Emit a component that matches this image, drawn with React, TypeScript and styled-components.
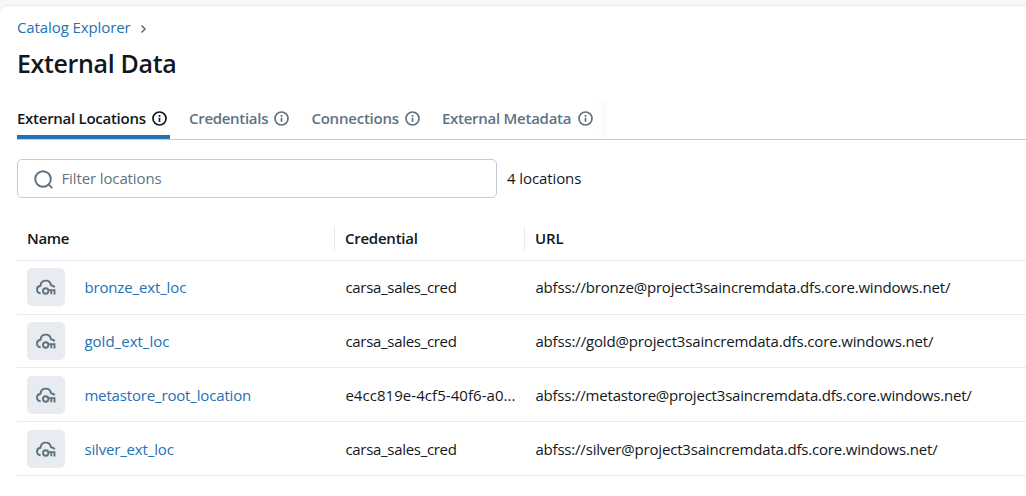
import React from 'react';
import styled, { createGlobalStyle } from 'styled-components';

const GlobalStyle = createGlobalStyle`
  * { box-sizing: border-box; }
  body {
    margin: 0;
    background: #f6f7f9;
    color: #11171c;
    font-family: "Segoe UI", "Open Sans", "Noto Sans", sans-serif;
    font-size: 15px;
    line-height: 24px;
    overflow: hidden;
  }
`;

const Page = styled.div`
  height: 496px;
  padding-top: 5px;
`;

const Panel = styled.main`
  height: 491px;
  padding: 9px 0 0 17px;
  background: #fff;
  border-top: 1px solid #e8ecf0;
  border-top-left-radius: 8px;
`;

const Text = styled.span<{ $spacing?: number }>`
  letter-spacing: ${(p) => p.$spacing ?? 0}px;
  white-space: nowrap;
`;

const Breadcrumb = styled.nav`
  display: flex;
  align-items: center;
  gap: 9px;
  height: 24px;
  color: #2272b4;
`;

const Title = styled.h1`
  margin: 8px 0 0;
  height: 32px;
  font-size: 25px;
  line-height: 32px;
  font-weight: 600;
`;

const Tabs = styled.div`
  display: flex;
  gap: 19px;
  height: 42px;
  margin-top: 19px;
  border-bottom: 1px solid #c0cdd8;
`;

const Tab = styled.button<{ $width: number; $active?: boolean }>`
  display: flex;
  align-items: center;
  justify-content: space-between;
  width: ${(p) => p.$width}px;
  height: 41px;
  padding: 6px 3px 4px 0;
  border: 0;
  border-bottom: 4px solid ${(p) => (p.$active ? '#2272b4' : 'transparent')};
  background: none;
  color: ${(p) => (p.$active ? '#11171c' : '#5f7281')};
  font: inherit;
  font-weight: 600;
`;

const ScrollShade = styled.div`
  width: 10px;
  height: 36px;
  margin: 4px 0 0 -17px;
  background: linear-gradient(90deg, #fff, #fbfbfb 50%, #fff);
`;

const Toolbar = styled.div`
  display: flex;
  align-items: center;
  gap: 10px;
  margin-top: 19px;
`;

const Search = styled.label`
  display: flex;
  align-items: center;
  gap: 9px;
  width: 480px;
  height: 39px;
  padding: 0 0 1px 16px;
  border: 1px solid #c0cdd8;
  border-radius: 5px;
  color: #5f7281;
`;

const Count = styled.div`
  padding-bottom: 2px;
`;

const Table = styled.div`
  margin-top: 18px;
`;

const Row = styled.div<{ $header?: boolean }>`
  display: grid;
  grid-template-columns: 317px 190px 1fr;
  align-items: center;
  height: ${(p) => (p.$header ? 44.8 : 53.8)}px;
  border-bottom: 1px solid #e8ecf0;
  font-weight: ${(p) => (p.$header ? 600 : 400)};
`;

const HeadCell = styled.div<{ $divided?: boolean }>`
  height: 24px;
  padding-left: 10px;
  border-left: ${(p) => (p.$divided ? '1px solid #e8ecf0' : '0')};
`;

const Cell = styled.div`
  display: flex;
  align-items: center;
  padding-left: 11.4px;
`;

const NameCell = styled(Cell)`
  gap: 19.4px;
  padding-left: 10px;
  color: #2272b4;
`;

const IconTile = styled.div`
  display: flex;
  align-items: center;
  justify-content: center;
  width: 38px;
  height: 38px;
  border-radius: 5px;
  background: #e8ecf0;
  color: #5f7281;
`;

const ChevronSvg = styled.svg`
  margin-top: 4px;
`;

const SearchSvg = styled.svg`
  margin: 2px 0 0 -0.5px;
`;

const InfoSvg = styled.svg`
  margin-top: 1px;
`;

const ChevronIcon = () => (
  <ChevronSvg width="7" height="10" viewBox="0 0 7 10" fill="none" stroke="#5f7281" strokeWidth="1.6">
    <path d="M1.5 1.5 5 5 1.5 8.5" />
  </ChevronSvg>
);

const InfoIcon = () => (
  <InfoSvg width="15" height="15" viewBox="0 0 15 15" fill="none" stroke="currentColor" strokeWidth="1.7">
    <circle cx="7.5" cy="7.5" r="6.5" />
    <path d="M7.5 6.8v4" />
    <path d="M7.5 4v1.8" />
  </InfoSvg>
);

const SearchIcon = () => (
  <SearchSvg width="19" height="19" viewBox="0 0 19 19" fill="none" stroke="currentColor" strokeWidth="1.9">
    <circle cx="9" cy="9" r="7.8" />
    <path d="m14.2 14.2 4 4" />
  </SearchSvg>
);

const CloudKeyIcon = () => (
  <svg width="20" height="16" viewBox="0 0 20 16" fill="none" stroke="currentColor" strokeWidth="1.9">
    <path d="M4.6 14.3C2.6 13.9 1 12.5 1 10.4 1 8.4 2.5 7 4.5 6.7 4.8 3.6 6.9 1.6 9.8 1.6c2.8 0 4.7 1.8 5.2 4.6 1.8.1 3 .9 3.7 2.1" />
    <circle cx="9.7" cy="12" r="2.7" />
    <path d="M12.4 11.1h7M18.5 11.1v4.3M15.3 11.1v4.1" />
  </svg>
);

const tabs = [
  { label: 'External Locations', width: 153, spacing: -0.27 },
  { label: 'Credentials', width: 103.4, spacing: -0.3 },
  { label: 'Connections', width: 111.6, spacing: -0.22 },
  { label: 'External Metadata', width: 154, spacing: -0.27 },
];

const rows = [
  { name: 'bronze_ext_loc', cred: 'carsa_sales_cred', url: 'abfss://bronze@project3saincremdata.dfs.core.windows.net/', s: [-0.14, -0.3, -0.18] },
  { name: 'gold_ext_loc', cred: 'carsa_sales_cred', url: 'abfss://gold@project3saincremdata.dfs.core.windows.net/', s: [0.02, -0.3, -0.15] },
  { name: 'metastore_root_location', cred: 'e4cc819e-4cf5-40f6-a0...', url: 'abfss://metastore@project3saincremdata.dfs.core.windows.net/', s: [-0.16, 0.05, -0.2] },
  { name: 'silver_ext_loc', cred: 'carsa_sales_cred', url: 'abfss://silver@project3saincremdata.dfs.core.windows.net/', s: [-0.16, -0.3, -0.19] },
];

export default function App() {
  return (
    <Page>
      <GlobalStyle />
      <Panel>
        <Breadcrumb>
          <Text $spacing={-0.1}>Catalog Explorer</Text>
          <ChevronIcon />
        </Breadcrumb>
        <Title><Text $spacing={-0.35}>External Data</Text></Title>
        <Tabs>
          {tabs.map((t, i) => (
            <Tab key={t.label} $width={t.width} $active={i === 0}>
              <Text $spacing={t.spacing}>{t.label}</Text>
              <InfoIcon />
            </Tab>
          ))}
          <ScrollShade />
        </Tabs>
        <Toolbar>
          <Search>
            <SearchIcon />
            <Text $spacing={-0.12}>Filter locations</Text>
          </Search>
          <Count><Text $spacing={-0.1}>4 locations</Text></Count>
        </Toolbar>
        <Table>
          <Row $header>
            <HeadCell><Text $spacing={-0.3}>Name</Text></HeadCell>
            <HeadCell $divided><Text $spacing={-0.25}>Credential</Text></HeadCell>
            <HeadCell $divided><Text $spacing={-0.1}>URL</Text></HeadCell>
          </Row>
          {rows.map((r) => (
            <Row key={r.name}>
              <NameCell>
                <IconTile><CloudKeyIcon /></IconTile>
                <Text $spacing={r.s[0]}>{r.name}</Text>
              </NameCell>
              <Cell><Text $spacing={r.s[1]}>{r.cred}</Text></Cell>
              <Cell><Text $spacing={r.s[2]}>{r.url}</Text></Cell>
            </Row>
          ))}
        </Table>
      </Panel>
    </Page>
  );
}
